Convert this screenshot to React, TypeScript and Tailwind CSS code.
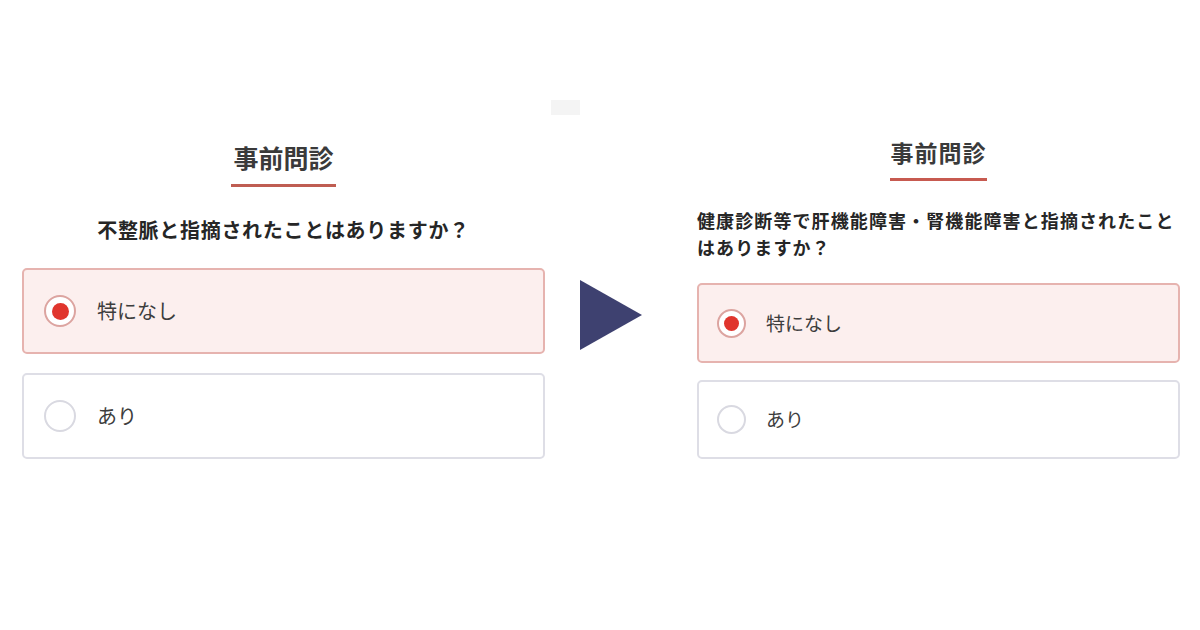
import React from "react";

const FONT = { fontFamily: '"Noto Sans CJK JP", "Noto Sans", sans-serif' };

function Radio({ selected, size, dot }: { selected: boolean; size: number; dot: number }) {
  return (
    <div
      className={
        "shrink-0 rounded-full border-2 bg-white flex items-center justify-center " +
        (selected ? "border-[#dca4a0]" : "border-[#d9d9e1]")
      }
      style={{ width: size, height: size }}
    >
      {selected && <div className="rounded-full bg-[#e0352d]" style={{ width: dot, height: dot }} />}
    </div>
  );
}

export default function App() {
  return (
    <div className="relative w-[1200px] h-[630px] bg-white flex items-start overflow-hidden" style={FONT}>
      <div className="absolute left-[551px] top-[100px] w-[29px] h-[15px] bg-[#f4f4f4]" />

      {/* Left panel */}
      <div className="ml-[22px] w-[523px] pt-[139px] flex flex-col items-center">
        <div className="text-[25px] leading-[36px] font-bold text-[#3a3a3a]">事前問診</div>
        <div className="mt-[9px] h-[3px] w-[105px] bg-[#bf5d52]" />
        <div className="mt-[29px] text-[20px] leading-[28px] font-bold text-[#262626] tracking-[0.7px] whitespace-nowrap">
          不整脈と指摘されたことはありますか？
        </div>
        <div className="mt-[24px] w-full flex flex-col gap-[19px]">
          <div className="h-[86px] rounded-[5px] border-2 border-[#e6b3af] bg-[#fcefee] flex items-center pl-[20px] gap-[21px]">
            <Radio selected size={32} dot={17} />
            <span className="text-[20px] text-[#3d3d3d]">特になし</span>
          </div>
          <div className="h-[86px] rounded-[5px] border-2 border-[#dedee6] bg-white flex items-center pl-[20px] gap-[21px]">
            <Radio selected={false} size={32} dot={17} />
            <span className="text-[20px] text-[#3d3d3d]">あり</span>
          </div>
        </div>
      </div>

      {/* Arrow */}
      <svg className="ml-[35px] mt-[280px] shrink-0" width="62" height="70" viewBox="0 0 62 70">
        <polygon points="0,0 62,35 0,70" fill="#3e4170" />
      </svg>

      {/* Right panel */}
      <div className="ml-[55px] w-[483px] pt-[135px] flex flex-col">
        <div className="self-center text-[23px] leading-[34px] font-bold tracking-[1px] text-[#3a3a3a]">事前問診</div>
        <div className="self-center mt-[9px] h-[3px] w-[97px] bg-[#c75a50]" />
        <div className="mt-[26px] text-[18px] leading-[27px] font-bold text-[#262626] tracking-[1.1px] whitespace-nowrap">
          健康診断等で肝機能障害・腎機能障害と指摘されたこと
          <br />
          はありますか？
        </div>
        <div className="mt-[22px] w-full flex flex-col gap-[17px]">
          <div className="h-[80px] rounded-[5px] border-2 border-[#e6b3af] bg-[#fcefee] flex items-center pl-[18px] gap-[20px]">
            <Radio selected size={29} dot={15} />
            <span className="text-[19px] text-[#3d3d3d]">特になし</span>
          </div>
          <div className="h-[79px] rounded-[5px] border-2 border-[#dedee6] bg-white flex items-center pl-[18px] gap-[20px]">
            <Radio selected={false} size={29} dot={15} />
            <span className="text-[19px] text-[#3d3d3d]">あり</span>
          </div>
        </div>
      </div>
    </div>
  );
}
